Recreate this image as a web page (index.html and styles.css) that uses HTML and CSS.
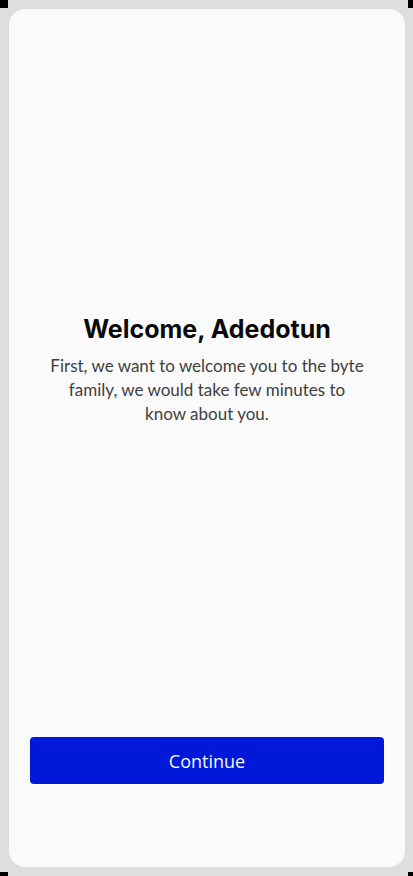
FILE: index.html
```html
<!DOCTYPE html>
<html lang="en">
<head>
<meta charset="utf-8">
<title>Welcome</title>
<link rel="stylesheet" href="styles.css">
</head>
<body>
  <div class="frame">
    <main class="card">
      <section class="intro">
        <h1 class="title">Welcome, Adedotun</h1>
        <p class="lead">First, we want to welcome you to the byte family, we would take few minutes to know about you.</p>
      </section>
      <button class="cta" type="button">Continue</button>
    </main>
  </div>
</body>
</html>
```

FILE: styles.css
```css
html, body {
  margin: 0;
  padding: 0;
  background: #000;
}

.frame {
  box-sizing: border-box;
  width: 413px;
  height: 876px;
  padding: 9px 8px 9px 9px;
  background: #dedede;
  clip-path: polygon(8px 0, 408px 0, 408px 8px, 413px 8px, 413px 872px, 408px 872px, 408px 876px, 8px 876px, 8px 872px, 0 872px, 0 8px, 8px 8px);
}

.card {
  box-sizing: border-box;
  height: 100%;
  background: #fafafa;
  border-radius: 16px;
  display: flex;
  flex-direction: column;
  padding: 0 21px 83px;
}

.intro {
  flex: 1;
  display: flex;
  flex-direction: column;
  align-items: center;
  justify-content: center;
  text-align: center;
  padding-bottom: 6px;
}

.title {
  margin: 0;
  font-family: Inter, "Liberation Sans", sans-serif;
  font-weight: 700;
  font-size: 25px;
  line-height: 30px;
  color: #0a0a0a;
}

.lead {
  margin: 10px 0 0;
  max-width: 318px;
  font-family: Lato, "Open Sans", sans-serif;
  font-size: 17px;
  line-height: 24px;
  color: #404040;
}

.cta {
  display: block;
  width: 100%;
  height: 47px;
  border: 0;
  border-radius: 4px;
  background: #0019d9;
  color: #f4f6ff;
  font-family: "Open Sans", Lato, sans-serif;
  font-size: 18px;
  cursor: pointer;
}
```
